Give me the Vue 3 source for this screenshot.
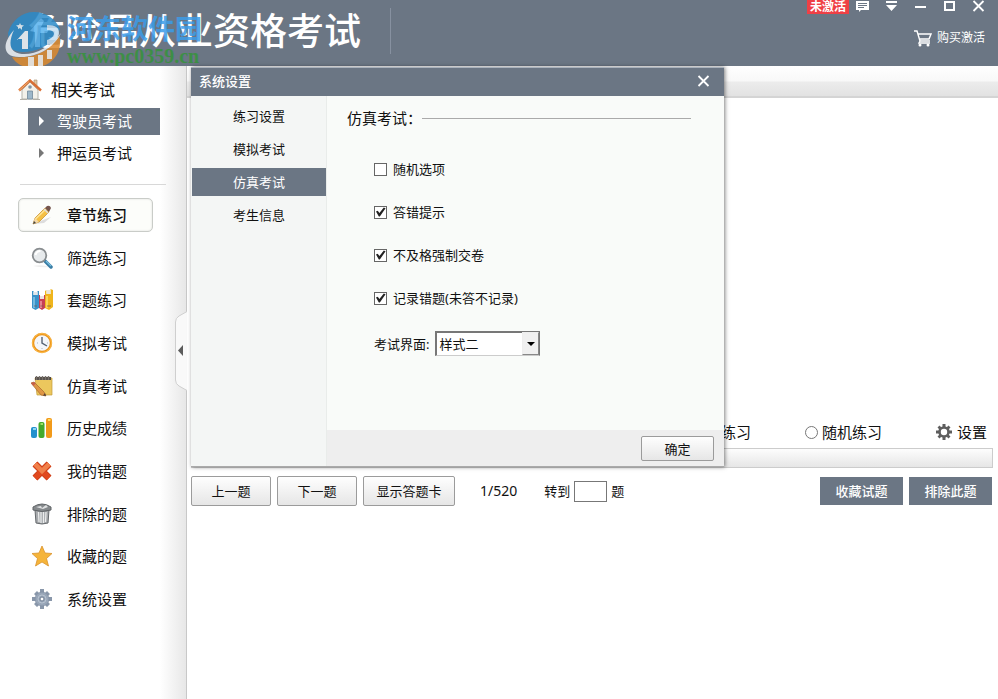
<template>
  <div class="app">
    <header class="header">
      <div class="brand">
        <h1 class="brand__title">危险品从业资格考试</h1>
        <div class="site-mark">
          <svg class="site-mark__logo" viewBox="0 0 56 56" aria-hidden="true">
            <path d="M3 21C7 8 17 0 29 0c12 0 22 7 26 17-4 11-14 19-28 22-9 2-17 1-22-3z" fill="#2b8bc9" />
            <path d="M7 45c17 2 37-3 47-22 5 17-8 33-26 33-9 0-17-4-21-11z" fill="#dd8a2e" />
            <path d="M9 18C-3 31-3 45 14 45c17 1 35-9 42-24-10 14-26 22-39 21C4 41 3 31 9 18z" fill="#eef2f6" />
            <path d="M12 28l8-9h3v18h-6V27h-5z" fill="#f2f6fa" />
            <path d="M15 11l1 2 3 .5-2 1.500V18l-2-2-2 1v-2l-2-1.500 3-.5z" fill="#e6f1f8" />
            <path d="M25 19l11-13 3 3-3 6h9l-3 6h-7v14h-5V20z" fill="#58b2ee" />
            <path d="M42 13q13 0 12 9-2 9-12 11v-5q6-2 7-6 0-4-7-4z" fill="#c5dff2" />
            <path d="M23 45h6v9h-6zM33 43h5v12h-5zM42 38h5v9h-5z" fill="#f6efe6" />
          </svg>
          <div class="site-mark__text">
            <span class="site-mark__name">河东软件园</span>
            <span class="site-mark__url">www.pc0359.cn</span>
          </div>
        </div>
      </div>
      <div class="header__right">
        <div class="window-bar">
          <span class="badge">未激活</span>
          <button class="icon-btn" aria-label="消息">
            <svg viewBox="0 0 13 12"><path d="M0 1h13v9H5l-2 2v-2H0z" fill="#fff" /><path d="M2 3.500h9M2 5.500h9M2 7.500h6" stroke="#6b7684" /></svg>
          </button>
          <button class="icon-btn" aria-label="菜单">
            <svg viewBox="0 0 13 12"><path d="M1 1h11v2H1zM1 5h11L6.500 11z" fill="#fff" /></svg>
          </button>
          <button class="icon-btn" aria-label="最小化">
            <svg viewBox="0 0 13 12"><path d="M1 6h11v2H1z" fill="#fff" /></svg>
          </button>
          <button class="icon-btn" aria-label="最大化">
            <svg viewBox="0 0 13 12"><path d="M2 2h9v8H2z" fill="none" stroke="#fff" stroke-width="2" /></svg>
          </button>
          <button class="icon-btn" aria-label="关闭">
            <svg viewBox="0 0 13 12"><path d="M1.500 1l10 10M11.500 1l-10 10" stroke="#fff" stroke-width="1.800" /></svg>
          </button>
        </div>
        <a class="buy" href="#">
          <svg viewBox="0 0 18 17" aria-hidden="true">
            <path d="M0 1h3l3 10h10M4 4h13l-2 5H6M6 11l-1 2h11" fill="none" stroke="#fff" stroke-width="1.400" />
            <circle cx="6" cy="15" r="1.500" fill="#fff" /><circle cx="14" cy="15" r="1.500" fill="#fff" />
          </svg>
          购买激活
        </a>
      </div>
    </header>

    <div class="body">
      <aside class="sidebar">
        <div class="group">
          <svg class="group__icon" viewBox="0 0 24 22" aria-hidden="true">
            <path d="M4 11v9h16v-9l-8-8z" fill="#f3f1ea" stroke="#b5b5ad" />
            <path d="M16 1h3v7l-3-3z" fill="#e0c9a8" stroke="#a38d70" stroke-width=".6" />
            <path d="M1 11.500L12 1.500l11 10" fill="none" stroke="#d96f34" stroke-width="2.400" />
            <path d="M1 11.500L11 2.500" stroke="#f0b070" />
            <circle cx="12" cy="8" r="1.800" fill="#7f95a5" />
            <path d="M9.500 12h5v8h-5z" fill="#9db7c9" stroke="#71899b" stroke-width=".8" />
            <path d="M2 20.500h7M15 20.500h7" stroke="#b3b0a8" />
          </svg>
          相关考试
        </div>
        <ul class="exams">
          <li v-for="exam in exams" :key="exam">
            <button class="exam" :class="{ 'is-active': exam === activeExam }" @click="activeExam = exam">
              <svg viewBox="0 0 5 10" aria-hidden="true"><path d="M0 0l5 5-5 5z" fill="currentColor" /></svg>
              <span>{{ exam }}</span>
            </button>
          </li>
        </ul>
        <nav class="menu">
          <button
            v-for="item in menu"
            :key="item.id"
            class="menu__item"
            :class="{ 'is-active': item.id === activeMenu }"
            @click="activeMenu = item.id"
          >
            <svg viewBox="0 0 22 22" aria-hidden="true">
              <g v-if="item.id === 'chapter'">
                <path d="M3 20l10-1 7-6-8 3z" fill="#ddd" />
                <path d="M2 20l2-6L14 4l4 4L8 18z" fill="#f5c044" stroke="#c18a29" stroke-width=".7" />
                <path d="M4.500 15L15 5" stroke="#ffe596" stroke-width="1.500" />
                <path d="M14 4l2-2q3-1 4 2l-2 4z" fill="#75554d" />
                <path d="M13 5l4 4" stroke="#ddd" stroke-width="1.500" />
                <path d="M2 20l2-6 4 4z" fill="#f4d9a8" /><path d="M2 20l1-3 2 2z" fill="#444" />
              </g>
              <g v-else-if="item.id === 'filter'">
                <path d="M2 19q8-2 17 1-8 1-17-1z" fill="#eee" />
                <path d="M13 13l7 7" stroke="#397da5" stroke-width="3.500" stroke-linecap="round" />
                <path d="M15 14l5 5" stroke="#79bddd" stroke-width="1.200" />
                <circle cx="8.500" cy="8.500" r="6.800" fill="#e7eaec" stroke="#898d90" stroke-width="1.800" />
                <path d="M4.500 8q1-4 5-4" fill="none" stroke="#fff" stroke-width="2" />
              </g>
              <g v-else-if="item.id === 'sets'">
                <path d="M1 2h1.500v4h4V2H8v17l-3.500 2L1 19z" fill="#3a92c8" /><path d="M2.500 3h4v3h-4z" fill="#e4e6e8" /><path d="M3 8v11" stroke="#86c6e8" stroke-width="1.500" />
                <path d="M8 6h1v4h4V6h1v13l-3 2-3-2z" fill="#c83f54" /><path d="M9 7h4v3H9z" fill="#ebe3e3" /><path d="M10 12v7" stroke="#ef98a4" stroke-width="1.500" />
                <path d="M14 2l1.500-1v4h4V0L22 1v17l-4 3-4-2z" fill="#efb51d" /><path d="M15.500 1h4v4h-4z" fill="#eae6d8" /><path d="M16 7v12" stroke="#ffe070" stroke-width="1.500" />
                <path d="M3 17h3M9.500 17h3M16 17h4" stroke="#6d5a50" stroke-width=".7" />
              </g>
              <g v-else-if="item.id === 'mock'">
                <circle cx="11" cy="11" r="9" fill="#f4f6fa" stroke="#ec9418" stroke-width="2.400" />
                <circle cx="11" cy="11" r="9.500" fill="none" stroke="#ffc457" stroke-width=".8" />
                <path d="M11 5v6l5 3" fill="none" stroke="#566273" stroke-width="1.400" />
                <path d="M6 11h.8M11 16v.8M16 11h.8" stroke="#99a2ae" />
              </g>
              <g v-else-if="item.id === 'simulate'">
                <path d="M4 3h17v17H6z" fill="#ecc75d" stroke="#c39b39" stroke-width=".7" />
                <path d="M4 2h16v3H4z" fill="#504a43" />
                <path d="M5.500 1v4M8.500 1v4M11.500 1v4M14.500 1v4M17.500 1v4" stroke="#77716b" stroke-width="1.500" />
                <path d="M0 8l3-1 10 10 2 4-5-1z" fill="#df9645" stroke="#a7672d" stroke-width=".7" />
                <path d="M0 8l3-1 1.500 1.500L2.500 11z" fill="#c65e4c" /><path d="M15 21l-3-.5 2-2.500z" fill="#554239" />
              </g>
              <g v-else-if="item.id === 'history'">
                <rect x="0" y="10" width="6" height="11" rx="2" fill="#2390cd" /><path d="M2 12h3" stroke="#8ad4f2" stroke-width="2" />
                <rect x="7.500" y="5" width="6" height="16" rx="2" fill="#45aa2b" /><path d="M9.500 7H12" stroke="#a2df67" stroke-width="2" />
                <rect x="15" y="1" width="6" height="20" rx="2" fill="#f29a1a" /><path d="M17 3h2.500" stroke="#ffda63" stroke-width="2" />
              </g>
              <g v-else-if="item.id === 'wrong'">
                <path d="M4 4l14 14M18 4L4 18" stroke="#c93a14" stroke-width="7" />
                <path d="M4 4l14 14M18 4L4 18" stroke="#e0491f" stroke-width="5.500" />
                <path d="M4 4l7 7 7-7" fill="none" stroke="#f0804a" stroke-width="4.500" />
              </g>
              <g v-else-if="item.id === 'excluded'">
                <path d="M4 7h14l-1 13q-6 2-12 0z" fill="#a8abae" stroke="#65696c" />
                <path d="M7.500 9l.5 10M10 9v11M12.500 9v11M15 9l-.5 10" stroke="#eceded" stroke-width="1.200" />
                <path d="M2 4q9-6 18 0v3q-9 3-18 0z" fill="#85898c" stroke="#606467" />
                <path d="M5 4l5-1 1 2 4-3 2 2-5 2z" fill="#dfe1e2" />
              </g>
              <path
                v-else-if="item.id === 'favorite'"
                d="M11 1l3 7 7 .5-5.500 5 2 7.500L11 17l-6.500 4 2-7.500L1 8.500 8 8z"
                fill="#f5b43a" stroke="#d9922b" stroke-width=".8" stroke-linejoin="round"
              />
              <g v-else>
                <path d="M9 1h4v4H9zM9 17h4v4H9zM1 9h4v4H1zM17 9h4v4h-4zM3 6l3-3 3 3-3 3zM13 6l3-3 3 3-3 3zM3 16l3-3 3 3-3 3zM13 16l3-3 3 3-3 3z" fill="#8997aa" />
                <circle cx="11" cy="11" r="7" fill="#98a6b8" stroke="#7d8b9f" stroke-width=".6" />
                <circle cx="11" cy="11" r="4" fill="none" stroke="#b7c2d0" /><circle cx="11" cy="11" r="2" fill="#fff" stroke="#6f7d92" />
              </g>
            </svg>
            <span>{{ item.label }}</span>
          </button>
        </nav>
        <button class="collapse" aria-label="收起">
          <svg viewBox="0 0 12 80">
            <path d="M12 .5L4 5Q.5 7 .5 11v58q0 4 3.500 6l8 4.500" fill="#f9f9f9" stroke="#cfcfcf" />
            <path d="M8 34v11l-5-5.500z" fill="#5c5c5c" />
          </svg>
        </button>
      </aside>

      <main class="main">
        <div class="toolbar"></div>
        <div class="question"></div>
        <div class="modes">
          <label class="mode"><input v-model="mode" type="radio" value="order" />顺序练习</label>
          <label class="mode"><input v-model="mode" type="radio" value="random" />随机练习</label>
          <button class="settings">
            <svg viewBox="0 0 16 16" aria-hidden="true">
              <path d="M6.500 0h3v3h-3zM6.500 13h3v3h-3zM0 6.500h3v3H0zM13 6.500h3v3h-3zM1.500 3.500l2-2L6 4 4 6zM10 4l2.500-2.500 2 2L12 6zM1.500 12.500L4 10l2 2-2.500 2.500zM10 12l2-2 2.500 2.500-2 2z" fill="#5e5e5e" />
              <circle cx="8" cy="8" r="4.500" fill="none" stroke="#5e5e5e" stroke-width="2.600" />
            </svg>
            设置
          </button>
        </div>
        <div class="status"></div>
        <div class="actions">
          <button class="btn">上一题</button>
          <button class="btn">下一题</button>
          <button class="btn btn--wide">显示答题卡</button>
          <span class="actions__count">1/520</span>
          <label class="goto">转到<input v-model="target" type="text" aria-label="题号" />题</label>
          <button class="btn-solid">收藏试题</button>
          <button class="btn-solid">排除此题</button>
        </div>
      </main>
    </div>

    <section class="dialog" role="dialog" aria-labelledby="dialog-title">
      <header class="dialog__bar">
        <h2 id="dialog-title">系统设置</h2>
        <button class="icon-btn" aria-label="关闭">
          <svg viewBox="0 0 13 12"><path d="M1.500 1l10 10M11.500 1l-10 10" stroke="#fff" stroke-width="1.800" /></svg>
        </button>
      </header>
      <div class="dialog__body">
        <nav class="tabs">
          <button
            v-for="tab in tabs"
            :key="tab"
            class="tabs__item"
            :class="{ 'is-active': tab === activeTab }"
            @click="activeTab = tab"
          >{{ tab }}</button>
        </nav>
        <div class="pane">
          <h3 class="pane__title">仿真考试：</h3>
          <div class="pane__form">
            <label v-for="opt in options" :key="opt.label" class="check">
              <input v-model="opt.on" type="checkbox" />{{ opt.label }}
            </label>
            <div class="field">
              <label for="layout">考试界面:</label>
              <div class="select">
                <select id="layout" v-model="layout">
                  <option>样式一</option>
                  <option>样式二</option>
                </select>
                <span class="select__arrow"></span>
              </div>
            </div>
          </div>
          <footer class="pane__footer">
            <button class="btn btn--ok">确定</button>
          </footer>
        </div>
      </div>
    </section>
  </div>
</template>

<script setup>
import { reactive, ref } from 'vue'

const exams = ['驾驶员考试', '押运员考试']
const activeExam = ref('驾驶员考试')

const menu = [
  { id: 'chapter', label: '章节练习' },
  { id: 'filter', label: '筛选练习' },
  { id: 'sets', label: '套题练习' },
  { id: 'mock', label: '模拟考试' },
  { id: 'simulate', label: '仿真考试' },
  { id: 'history', label: '历史成绩' },
  { id: 'wrong', label: '我的错题' },
  { id: 'excluded', label: '排除的题' },
  { id: 'favorite', label: '收藏的题' },
  { id: 'system', label: '系统设置' },
]
const activeMenu = ref('chapter')

const mode = ref('order')
const target = ref('')

const tabs = ['练习设置', '模拟考试', '仿真考试', '考生信息']
const activeTab = ref('仿真考试')
const options = reactive([
  { label: '随机选项', on: false },
  { label: '答错提示', on: true },
  { label: '不及格强制交卷', on: true },
  { label: '记录错题(未答不记录)', on: true },
])
const layout = ref('样式二')
</script>

<style>
body {
  margin: 0;
}
</style>

<style scoped>
.app {
  position: relative;
  display: flex;
  flex-direction: column;
  min-height: 100vh;
  background: #fff;
  color: #111;
  font-family: "Noto Sans", "Noto Sans CJK SC", sans-serif;
  font-size: 13px;
  line-height: 20px;
}
.app * { box-sizing: border-box; }
button,
input,
select {
  margin: 0;
  padding: 0;
  border: 0;
  background: none;
  color: inherit;
  font: inherit;
}
h1, h2, h3, ul { margin: 0; padding: 0; list-style: none; }
svg { display: block; flex: none; }

/* header */
.header {
  display: flex;
  justify-content: space-between;
  height: 66px;
  background: #6b7684;
  color: #fff;
}
.brand {
  position: relative;
  align-self: flex-start;
  margin-top: 8px;
  padding: 0 29px 0 28px;
  border-right: 1px solid #8791a0;
}
.brand__title {
  font-size: 37px;
  font-weight: 500;
  line-height: 46px;
}
.site-mark {
  position: absolute;
  top: 4px;
  left: 5px;
  display: flex;
  gap: 6px;
  opacity: 0.85;
}
.site-mark__logo { width: 56px; height: 56px; }
.site-mark__text {
  display: flex;
  flex-direction: column;
  font-weight: 700;
  white-space: nowrap;
}
.site-mark__name {
  color: #3c9ce8;
  font-size: 27px;
  line-height: 34px;
}
.site-mark__url {
  color: #36933c;
  font-family: "Liberation Serif", serif;
  font-size: 20px;
  line-height: 20px;
}
.header__right {
  display: flex;
  flex-direction: column;
  align-items: flex-end;
  gap: 14px;
  padding-right: 13px;
}
.window-bar {
  display: flex;
  align-items: flex-start;
  gap: 16px;
}
.badge {
  margin-right: -9px;
  padding: 0 3px;
  background: #ef4045;
  font-size: 12px;
  font-weight: 700;
  line-height: 14px;
}
.icon-btn svg { width: 13px; height: 12px; }
.buy {
  display: flex;
  align-items: center;
  gap: 5px;
  color: #fff;
  font-size: 12px;
  text-decoration: none;
}
.buy svg { width: 18px; height: 17px; }

/* sidebar */
.body {
  display: flex;
  flex: 1;
}
.sidebar {
  position: relative;
  flex: none;
  width: 187px;
  padding: 10px 20px 20px 18px;
  border-right: 1px solid #c8c8c8;
  background: linear-gradient(to right, #fff 160px, #e6e6e6 187px);
}
.group {
  display: flex;
  align-items: center;
  gap: 9px;
  height: 28px;
  font-size: 16px;
}
.group__icon { width: 24px; height: 22px; }
.exams {
  display: grid;
  gap: 5px;
  margin: 4px 0 0 2px;
  padding: 0 6px 17px 8px;
  border-bottom: 1px solid #d8d8d8;
}
.exam {
  display: flex;
  align-items: center;
  gap: 13px;
  width: 100%;
  height: 27px;
  padding: 0 0 2px 11px;
  font-size: 15px;
}
.exam svg { width: 5px; height: 10px; color: #777; }
.exam.is-active,
.exam.is-active svg { color: #fff; }
.exam.is-active { background: #6b7684; }
.menu {
  display: flex;
  flex-direction: column;
  justify-content: space-between;
  min-height: 418px;
  margin-top: 13px;
}
.menu__item {
  display: flex;
  align-items: center;
  gap: 14px;
  width: 135px;
  height: 34px;
  padding-left: 12px;
  border: 1px solid transparent;
  border-radius: 5px;
  font-size: 15px;
}
.menu__item svg { width: 22px; height: 22px; }
.menu__item.is-active {
  border: 1px solid #c9ccc8;
  background: #fcfdfa;
  box-shadow: inset 0 0 2px #d5d8d4;
  font-weight: 500;
}
.collapse {
  position: absolute;
  top: 245px;
  right: -1px;
}
.collapse svg { width: 12px; height: 80px; }

/* main */
.main {
  flex: 1;
  min-width: 0;
}
.toolbar {
  height: 32px;
  border-bottom: 2px solid #d4d4d4;
  background: linear-gradient(#fff 0, #f8f8f8 15px, #ececec 16px, #e2e2e2);
}
.question { min-height: 320px; }
.modes {
  display: flex;
  align-items: center;
  justify-content: flex-end;
  gap: 54px;
  height: 30px;
  padding: 0 11px 2px 0;
  font-size: 15px;
}
.mode {
  display: flex;
  align-items: center;
  gap: 4px;
}
.mode input {
  appearance: none;
  width: 13px;
  height: 13px;
  border: 1px solid #777;
  border-radius: 50%;
  background: #fff;
}
.mode input:checked { background: radial-gradient(#333 3px, #fff 4px); }
.settings {
  display: flex;
  align-items: center;
  gap: 5px;
}
.settings svg { width: 16px; height: 16px; }
.status {
  height: 20px;
  margin: 0 5px 0 4px;
  border: 1px solid #ccc;
  background: linear-gradient(#fdfdfd, #e6e6e6);
}
.actions {
  display: flex;
  align-items: center;
  gap: 6px;
  padding: 8px 6px 20px 4px;
}
.btn {
  width: 80px;
  height: 30px;
  border: 1px solid #9b9b9b;
  border-radius: 2px;
  background: linear-gradient(#fefefe, #e6e6e6);
}
.btn--wide { width: 92px; }
.actions__count {
  padding: 0 21px 0 19px;
  font-size: 14px;
}
.goto {
  display: flex;
  align-items: center;
  gap: 4px;
  margin-right: auto;
}
.goto input {
  width: 33px;
  height: 21px;
  border: 1px solid #777;
  background: #fff;
}
.btn-solid {
  width: 83px;
  height: 28px;
  background: #6b7684;
  color: #fff;
  font-weight: 500;
}

/* settings dialog */
.dialog {
  position: absolute;
  top: 67px;
  left: 191px;
  width: 533px;
  border-bottom: 1px solid #aaa;
  background: #f9fbf9;
  box-shadow: 1px 0 4px rgba(0, 0, 0, 0.5);
}
.dialog__bar {
  display: flex;
  align-items: center;
  justify-content: space-between;
  height: 29px;
  padding: 0 14px 2px 8px;
  border-top: 1px solid #aab2bc;
  background: #6b7684;
  color: #fff;
}
.dialog__bar h2 {
  font-size: 13px;
  font-weight: 500;
}
.dialog__body { display: flex; }
.tabs {
  display: flex;
  flex-direction: column;
  gap: 5px;
  flex: none;
  width: 136px;
  padding: 6px 0 0 1px;
  border-right: 1px solid #e9ecea;
  background: #f4f6f5;
}
.tabs__item { height: 28px; }
.tabs__item.is-active {
  background: #6b7684;
  color: #fff;
}
.pane {
  flex: 1;
  min-width: 0;
}
.pane__title {
  display: flex;
  align-items: center;
  padding: 12px 33px 0 20px;
  font-size: 15px;
  font-weight: 400;
}
.pane__title::after {
  content: "";
  flex: 1;
  height: 1px;
  background: #aaa;
}
.pane__form {
  display: flex;
  flex-direction: column;
  gap: 23px;
  padding: 31px 20px 74px 47px;
}
.check {
  display: flex;
  align-items: center;
  gap: 6px;
}
.check input {
  appearance: none;
  width: 13px;
  height: 13px;
  border: 1px solid #666;
  background: #fff;
}
.check input:checked::before {
  content: "";
  display: block;
  width: 11px;
  height: 11px;
  background: #222;
  clip-path: polygon(9% 45%, 25% 38%, 40% 60%, 80% 9%, 96% 16%, 44% 92%, 35% 92%);
}
.field {
  display: flex;
  align-items: center;
  gap: 6px;
}
.select {
  position: relative;
  width: 105px;
}
.select select {
  appearance: none;
  display: block;
  width: 100%;
  height: 25px;
  padding-left: 2px;
  border: 2px solid #777;
  border-right-width: 1px;
  border-bottom: 1px solid #ccc;
  background: #fff;
}
.select__arrow {
  position: absolute;
  top: 1px;
  right: 1px;
  display: flex;
  align-items: center;
  justify-content: center;
  width: 17px;
  height: 23px;
  border: 1px solid #888;
  border-top-color: #eee;
  border-left-color: #eee;
  background: #f0f0f0;
  pointer-events: none;
}
.select__arrow::before {
  content: "";
  border: 4px solid transparent;
  border-top-color: #000;
  border-bottom: 0;
}
.pane__footer {
  display: flex;
  justify-content: flex-end;
  padding: 6px 10px 5px;
  background: #eee;
}
.btn--ok {
  width: 73px;
  height: 25px;
}
</style>
